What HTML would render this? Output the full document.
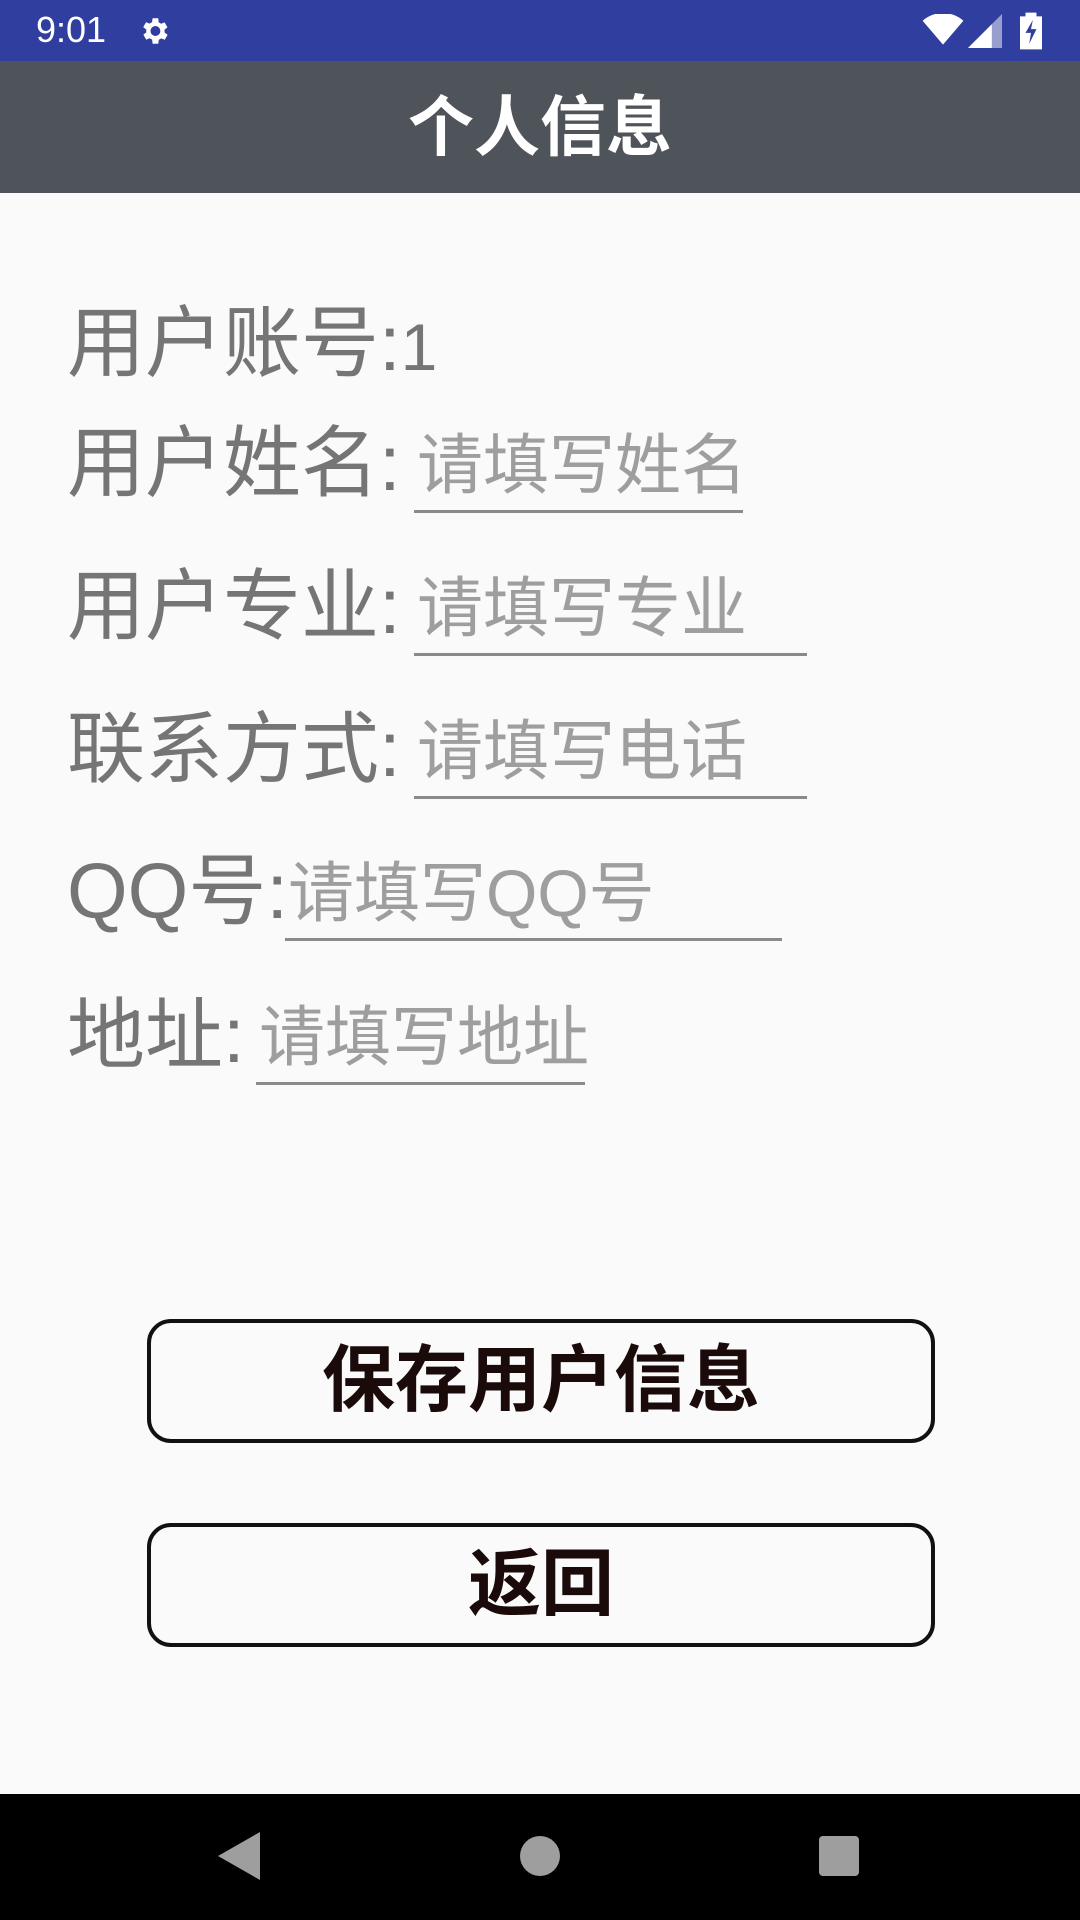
<!DOCTYPE html>
<html><head><meta charset="utf-8"><style>
body{margin:0;width:1080px;height:1920px;background:#fafafa;position:relative;overflow:hidden;font-family:"Liberation Sans","Noto Sans CJK SC",sans-serif}
.a{position:absolute}
.sb{left:0;top:0;width:1080px;height:61px;background:#303f9f;color:#fff}
.tb{left:0;top:61px;width:1080px;height:132px;background:#4f535a;color:#fff;font-size:66px;font-weight:bold;text-align:center;line-height:132px}
.lab{left:67px;font-size:78px;color:#757575;line-height:100px;white-space:nowrap}
.hint{position:absolute;color:#9e9e9e;font-size:66px;line-height:100px;white-space:nowrap}
.ul{height:3px;background:#8a8a8a}
.btn{left:147px;width:780px;height:116px;border:4px solid #111;border-radius:24px;text-align:center;line-height:116px;font-size:73px;font-weight:bold;color:#1a0a0a}
.nav{left:0;top:1794px;width:1080px;height:126px;background:#000}
</style></head><body>
<div class="a sb">
<div class="a" style="left:36px;top:8px;font-size:36px;line-height:44px">9:01</div>
<svg class="a" style="left:137px;top:14px" width="34" height="34" viewBox="0 0 24 24"><path fill="#fff" d="M19.4 13a7.5 7.5 0 000-2l2.1-1.6-2-3.5-2.5 1a7 7 0 00-1.7-1L15 3h-4l-.4 2.8a7 7 0 00-1.7 1l-2.5-1-2 3.5L6.6 11a7.5 7.5 0 000 2l-2.1 1.6 2 3.5 2.5-1a7 7 0 001.7 1L11 21h4l.4-2.8a7 7 0 001.7-1l2.5 1 2-3.5zM13 15.5a3.5 3.5 0 110-7 3.5 3.5 0 010 7z"/></svg>
<svg class="a" style="left:922px;top:14px" width="42" height="34" viewBox="0 0 24 20"><path fill="#fff" d="M12 18L0 4a18 18 0 0124 0z"/></svg>
<svg class="a" style="left:968px;top:14px" width="34" height="34" viewBox="0 0 20 20"><path fill="#fff" d="M20 0v20H0z" opacity=".5"/><path fill="#fff" d="M14 6v14H0z"/></svg>
<svg class="a" style="left:1020px;top:12px" width="22" height="38" viewBox="0 0 12 20"><path fill="#fff" d="M3 0h6v2h3v18H0V2h3z"/><path fill="#303f9f" d="M7 4L3 11h3l-1 6 4-8H6z"/></svg>
</div>
<div class="a tb">个人信息</div>

<div class="a lab" style="top:293px">用户账号:<span style="font-size:66px">1</span></div>
<div class="a lab" style="top:413px">用户姓名:</div>
<div class="hint" style="left:417px;top:415px">请填写姓名</div>
<div class="a ul" style="left:414px;top:510px;width:329px"></div>
<div class="a lab" style="top:556px">用户专业:</div>
<div class="hint" style="left:417px;top:558px">请填写专业</div>
<div class="a ul" style="left:414px;top:653px;width:393px"></div>
<div class="a lab" style="top:699px">联系方式:</div>
<div class="hint" style="left:417px;top:701px">请填写电话</div>
<div class="a ul" style="left:414px;top:796px;width:393px"></div>
<div class="a lab" style="top:841px">QQ号:</div>
<div class="hint" style="left:288px;top:843px">请填写QQ号</div>
<div class="a ul" style="left:285px;top:938px;width:497px"></div>
<div class="a lab" style="top:985px">地址:</div>
<div class="hint" style="left:259px;top:987px">请填写地址</div>
<div class="a ul" style="left:256px;top:1082px;width:329px"></div>

<div class="a btn" style="top:1319px">保存用户信息</div>
<div class="a btn" style="top:1523px">返回</div>

<div class="a nav">
<svg class="a" style="left:218px;top:38px" width="42" height="48" viewBox="0 0 42 48"><path fill="#9e9e9e" d="M42 0v48L0 24z"/></svg>
<div class="a" style="left:520px;top:42px;width:40px;height:40px;border-radius:50%;background:#9e9e9e"></div>
<div class="a" style="left:819px;top:42px;width:40px;height:40px;border-radius:4px;background:#9e9e9e"></div>
</div>
</body></html>
